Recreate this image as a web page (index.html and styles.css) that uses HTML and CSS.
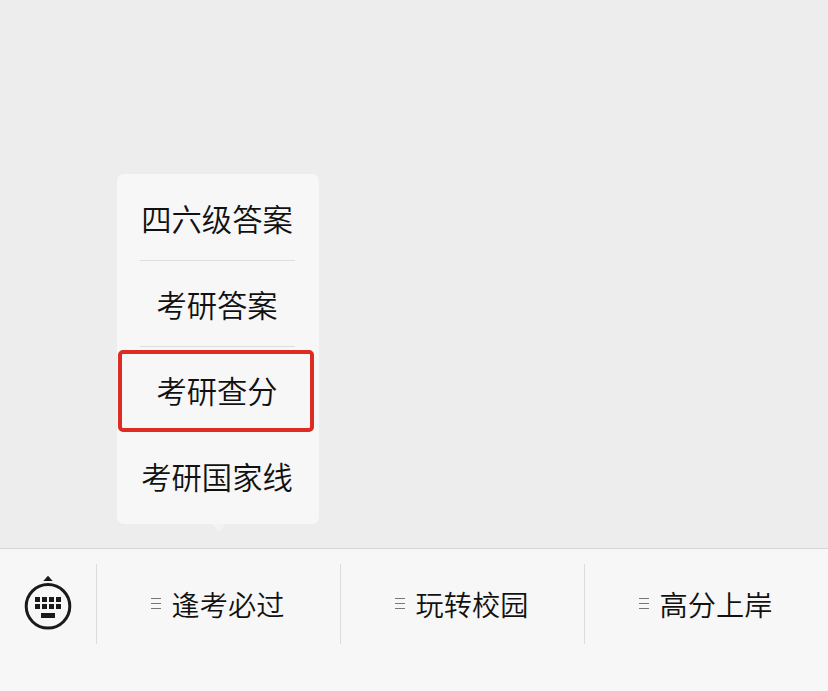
FILE: index.html
```html
<!DOCTYPE html>
<html lang="zh-CN">
<head>
    <meta charset="UTF-8">
    <meta name="viewport" content="width=device-width, initial-scale=1.0">
    <title>考研查分</title>
    <link rel="stylesheet" href="styles.css">
</head>
<body>
    <div class="chat"></div>
    <div class="menu-bar">
        <div class="keyboard">
            <svg width="50" height="56" viewBox="0 0 50 56">
                <path d="M20.3 7L25 1.8L29.7 7z" fill="#1a1a1a"/>
                <circle cx="25" cy="32.3" r="21.8" fill="none" stroke="#1a1a1a" stroke-width="3"/>
                <g fill="#1a1a1a">
                    <rect x="12" y="23" width="5" height="5"/>
                    <rect x="19" y="23" width="5" height="5"/>
                    <rect x="26" y="23" width="5" height="5"/>
                    <rect x="33" y="23" width="5" height="5"/>
                    <rect x="12" y="30" width="5" height="5"/>
                    <rect x="19" y="30" width="5" height="5"/>
                    <rect x="26" y="30" width="5" height="5"/>
                    <rect x="33" y="30" width="5" height="5"/>
                    <rect x="18" y="39" width="14" height="5"/>
                </g>
            </svg>
        </div>
        <div class="menu-item">
            <span class="lines"></span>
            <span>逢考必过</span>
            <div class="popup">
                <div class="popup-item">四六级答案</div>
                <div class="popup-item">考研答案</div>
                <div class="popup-item active">考研查分</div>
                <div class="popup-item">考研国家线</div>
            </div>
        </div>
        <div class="menu-item">
            <span class="lines"></span>
            <span>玩转校园</span>
        </div>
        <div class="menu-item">
            <span class="lines"></span>
            <span>高分上岸</span>
        </div>
    </div>
</body>
</html>
```
FILE: styles.css
```css
*,
*::before,
*::after {
    box-sizing: border-box;
}
body {
    margin: 0;
    height: 691px;
    display: flex;
    flex-direction: column;
    overflow: hidden;
    font-family: "Noto Sans CJK SC", sans-serif;
    font-weight: 350;
    color: #111;
    background-color: #ededed;
}
.chat {
    flex: 1;
}
.menu-bar {
    display: flex;
    height: 143px;
    padding: 15px 0 47px;
    border-top: 1px solid #d5d5d5;
    background-color: #f7f7f7;
}
.keyboard {
    width: 96px;
    display: flex;
    justify-content: center;
    padding-top: 10px;
}
.menu-item {
    position: relative;
    flex: 1;
    display: flex;
    justify-content: center;
    align-items: center;
    gap: 11px;
    height: 80px;
    padding: 0 2px 1px 0;
    border-left: 1px solid #dcdcdc;
    font-size: 28.2px;
    line-height: 40px;
}
.lines {
    width: 10px;
    height: 11px;
    border-top: 1px solid #777;
    border-bottom: 1px solid #777;
    background: linear-gradient(#777, #777) center / 100% 1px no-repeat;
}
/* submenu above the first item */
.popup {
    position: absolute;
    left: 20px;
    bottom: 120px;
    width: 202px;
    height: 350px;
    padding: 1px 24px 0 23px;
    border-radius: 7px;
    background-color: #f7f7f7;
}
.popup::after {
    content: "";
    position: absolute;
    left: 95px;
    top: 100%;
    border: 7px solid transparent;
    border-top-color: #f3f3f3;
    border-bottom: none;
}
.popup-item {
    position: relative;
    height: 86px;
    padding: 2px 1px 0 0;
    border-bottom: 1px solid #dedede;
    font-size: 30.3px;
    line-height: 82px;
    text-align: center;
    white-space: nowrap;
}
.popup-item.active,
.popup-item:last-child {
    border-bottom: none;
}
.popup-item.active::before {
    content: "";
    position: absolute;
    left: -22px;
    top: 3px;
    width: 196px;
    height: 82px;
    border: 4px solid #dc2c24;
    border-radius: 5px;
}
```
